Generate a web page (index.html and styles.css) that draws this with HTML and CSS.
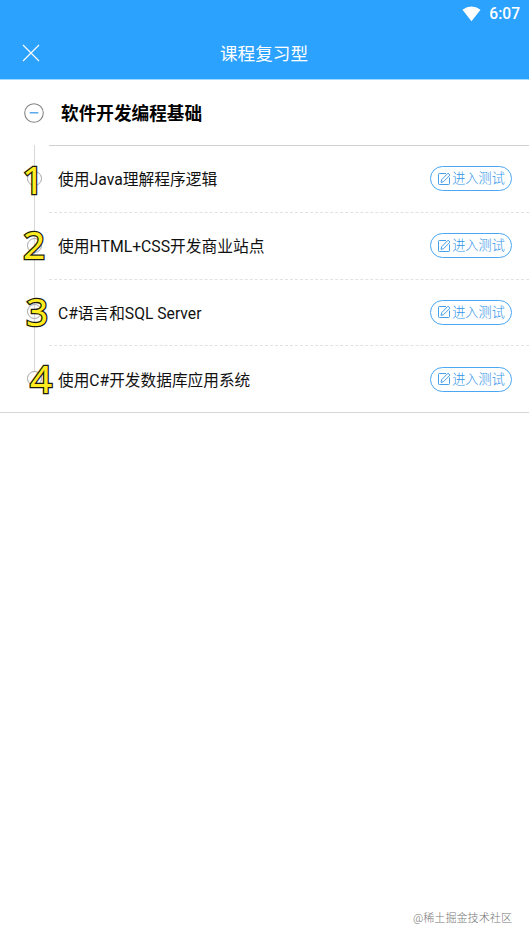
FILE: index.html
```
<!DOCTYPE html>
<html lang="zh-CN">
<head>
<meta charset="utf-8">
<title>课程复习型</title>
<link rel="stylesheet" href="styles.css">
</head>
<body>
<svg class="defs" aria-hidden="true">
  <symbol id="edit" viewBox="0 0 14 14">
    <path d="M9 1.5H2.3Q1.5 1.5 1.5 2.3V11.7Q1.5 12.5 2.3 12.5H11.7Q12.5 12.5 12.5 11.7V5.5M4 10.4L4.7 7.7L11 1.2L13 3.1L6.7 9.6Z"/>
  </symbol>
</svg>
<header class="header">
  <div class="status">
    <svg class="wifi" viewBox="0 0 20 16"><path d="M0.5 3.6Q10-3.4 19.5 3.6L10 15.5Z"/></svg>
    <span class="time">6:07</span>
  </div>
  <div class="bar">
    <svg class="close" viewBox="0 0 18 18"><path d="M1 1L17 17M17 1L1 17"/></svg>
    <h1 class="title">课程复习型</h1>
  </div>
</header>
<main class="list">
  <div class="group">
    <svg class="minus" viewBox="0 0 20 20"><circle cx="10" cy="10" r="9.3"/><path d="M5.7 9.8H14.3"/></svg>
    <h2 class="group-title">软件开发编程基础</h2>
  </div>
  <div class="row">
    <div class="rail"><i class="node"></i><b class="num n1">1</b></div>
    <div class="item first"><span class="name">使用Java理解程序逻辑</span><a class="btn"><svg class="edit"><use href="#edit"/></svg>进入测试</a></div>
  </div>
  <div class="row">
    <div class="rail"><i class="node"></i><b class="num n2">2</b></div>
    <div class="item"><span class="name">使用HTML+CSS开发商业站点</span><a class="btn"><svg class="edit"><use href="#edit"/></svg>进入测试</a></div>
  </div>
  <div class="row">
    <div class="rail"><i class="node"></i><b class="num n3">3</b></div>
    <div class="item"><span class="name">C#语言和SQL Server</span><a class="btn"><svg class="edit"><use href="#edit"/></svg>进入测试</a></div>
  </div>
  <div class="row last">
    <div class="rail"><i class="node"></i><b class="num n4">4</b></div>
    <div class="item"><span class="name">使用C#开发数据库应用系统</span><a class="btn"><svg class="edit"><use href="#edit"/></svg>进入测试</a></div>
  </div>
</main>
<footer class="mark">@稀土掘金技术社区</footer>
</body>
</html>
```
FILE: styles.css
```
* { box-sizing: border-box; }
body {
  margin: 0;
  height: 941px;
  display: flex;
  flex-direction: column;
  background: #fff;
  color: #111;
  font-family: Roboto, "Noto Sans CJK SC", sans-serif;
}
.defs { position: absolute; width: 0; height: 0; }
.header {
  height: 80px;
  background: #2ca2ff;
  border-bottom: 1px solid #a0dbff;
  color: #fff;
}
.status {
  height: 27px;
  display: flex;
  justify-content: flex-end;
  align-items: center;
  gap: 8px;
  padding-right: 9px;
}
.wifi { width: 19px; height: 16px; fill: #fff; }
.time { padding-top: 1px; font-size: 15.6px; line-height: 27px; font-weight: 500; }
.bar {
  height: 52px;
  display: grid;
  grid-template-columns: 40px 1fr 41px;
  align-items: center;
}
.close { width: 18px; height: 18px; margin-left: 22px; fill: none; stroke: #fff; stroke-width: 1.1; }
.title { margin: 0; padding-top: 1px; text-align: center; font-size: 17.6px; line-height: 26px; font-weight: 400; }
.group { height: 65px; display: flex; align-items: center; padding-left: 24px; }
.minus { width: 20px; height: 20px; fill: none; stroke: #858585; stroke-width: 1.1; }
.minus path { stroke: #3f9be8; stroke-width: 1.3; }
.group-title { margin: 0 0 0 17px; padding-top: 2px; font-size: 17.65px; line-height: 26px; font-weight: 700; color: #000; }
.list { border-bottom: 1px solid #d8d8d8; }
.row { height: 66.75px; display: flex; }
.rail {
  position: relative;
  width: 49px;
  display: flex;
  align-items: center;
  padding-left: 27px;
  background: linear-gradient(#d8d8d8, #d8d8d8) 34px 0 / 1px 100% no-repeat;
}
.last .rail { background-size: 1px 27px; }
.node { width: 15px; height: 15px; border: 1px solid #a5a5a5; border-radius: 50%; }
.last .node { background: #fff; }
.num {
  position: absolute;
  top: 7px;
  font: 400 39px/54px "Noto Sans", sans-serif;
  color: #ffed20;
  -webkit-text-stroke: 2.6px #1c1b10;
  paint-order: stroke fill;
  stroke-linejoin: round;
  z-index: 1;
}
.n1 { left: 22px; }
.n2 { left: 23px; top: 5px; }
.n3 { left: 26px; top: 5px; }
.n4 { left: 30px; top: 6px; }
.item {
  flex: 1;
  display: flex;
  align-items: center;
  justify-content: space-between;
  padding: 0 17px 0 9px;
  border-top: 1px dashed #e2e2e2;
}
.first { border-top: 1px solid #d0d0d0; }
.name { padding-top: 2px; font-size: 15.75px; line-height: 24px; }
.row:nth-child(n+4) .name { padding-top: 3px; font-size: 15.68px; }
.btn {
  width: 82px;
  height: 25px;
  display: flex;
  align-items: center;
  justify-content: center;
  gap: 2px;
  border: 1px solid #4ba7f3;
  border-radius: 13px;
  color: #2f93e8;
  font-size: 13.2px;
  line-height: 22px;
  padding-top: 1px;
  font-weight: 300;
}
.edit { width: 14px; height: 14px; margin: -1px -1px 0 0; fill: none; stroke: #459fe9; stroke-width: 1; }
.mark {
  margin-top: auto;
  padding: 0 17px 13px 0;
  text-align: right;
  font-size: 11.1px;
  line-height: 18px;
  font-weight: 300;
  color: #777;
}
```
